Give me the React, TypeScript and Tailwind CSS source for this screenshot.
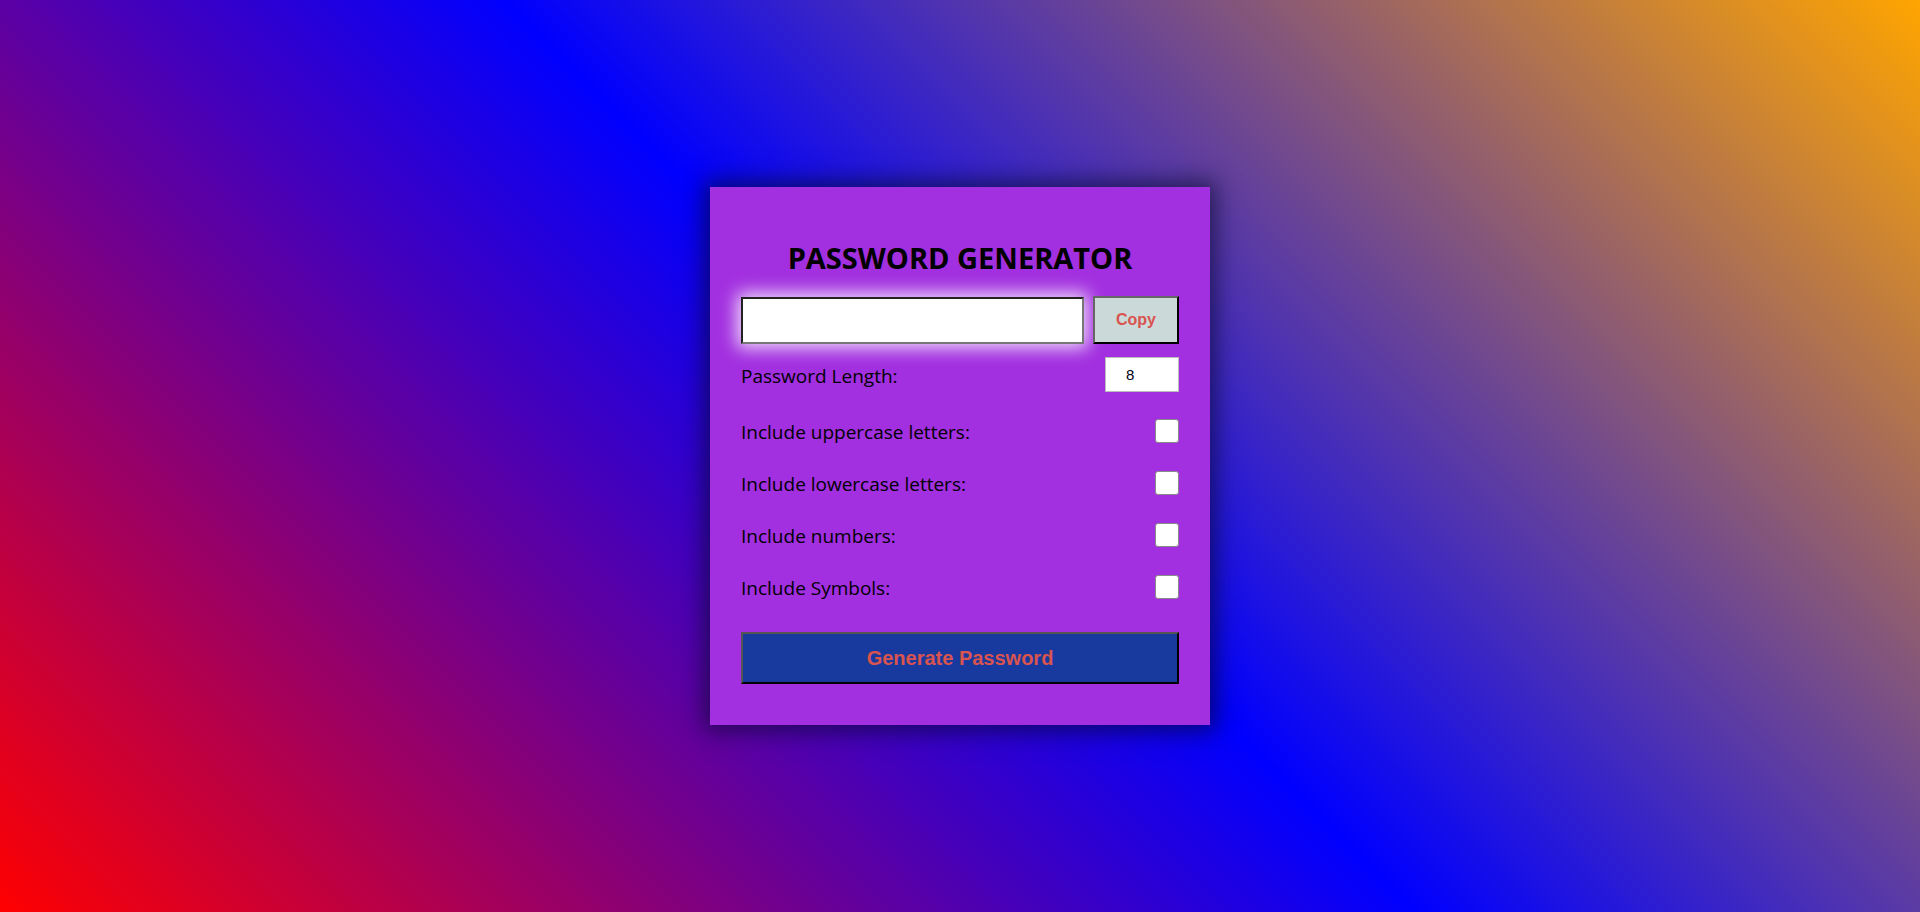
import React from "react";

export default function App() {
  const options = [
    { label: "Include uppercase letters:", mt: "mt-[27px]" },
    { label: "Include lowercase letters:", mt: "mt-[28px]" },
    { label: "Include numbers:", mt: "mt-[28px]" },
    { label: "Include Symbols:", mt: "mt-[28px]" },
  ];
  return (
    <div className="w-full h-[912px] flex items-center justify-center bg-[linear-gradient(45deg,#ff0000,#0000ff,#ffa500)]">
      <div className="w-[500px] bg-[#a22fe0] px-[31px] pt-[56px] pb-[41px] flex flex-col shadow-[0_0_22px_6px_rgba(10,10,40,0.65)] font-['Open_Sans',sans-serif] text-black">
        <div className="h-[29px] text-center text-[29px] font-bold leading-[29px]">
          PASSWORD GENERATOR
        </div>
        <div className="mt-[24px] h-[48px] flex items-start gap-[9px]">
          <input
            type="text"
            readOnly
            className="w-[343px] h-[47px] mt-[1px] bg-white border-2 border-t-[#222] border-l-[#222] border-b-[#777] border-r-[#777] shadow-[0_0_18px_4px_rgba(255,255,255,0.85)] outline-none"
          />
          <button className="w-[86px] h-[48px] bg-[#cbdad9] border-2 border-t-[#666] border-l-[#666] border-b-black border-r-black text-[#d9534f] font-bold text-[16px] font-['Liberation_Sans',Arial,sans-serif]">
            Copy
          </button>
        </div>
        <div className="mt-[13px] h-[35px] flex items-start justify-between">
          <span className="text-[19px] leading-[22px] mt-[8px]">Password Length:</span>
          <input
            type="text"
            readOnly
            value="8"
            className="w-[74px] h-[35px] bg-white border border-[#bbb] text-[15px] text-[#001] pl-[20px] font-['Liberation_Sans',Arial,sans-serif] outline-none"
          />
        </div>
        {options.map((o) => (
          <div key={o.label} className={`${o.mt} h-[24px] flex items-start justify-between`}>
            <span className="text-[19px] leading-[22px] mt-[2px]">{o.label}</span>
            <input
              type="checkbox"
              className="appearance-none w-[24px] h-[24px] bg-white border border-[#8a8a8a] rounded-[3px]"
            />
          </div>
        ))}
        <button className="mt-[33px] h-[52px] w-full bg-[#183a9f] border-2 border-t-[#555] border-l-[#555] border-b-black border-r-black text-[#d9534f] font-bold text-[20px] font-['Liberation_Sans',Arial,sans-serif]">
          Generate Password
        </button>
      </div>
    </div>
  );
}
